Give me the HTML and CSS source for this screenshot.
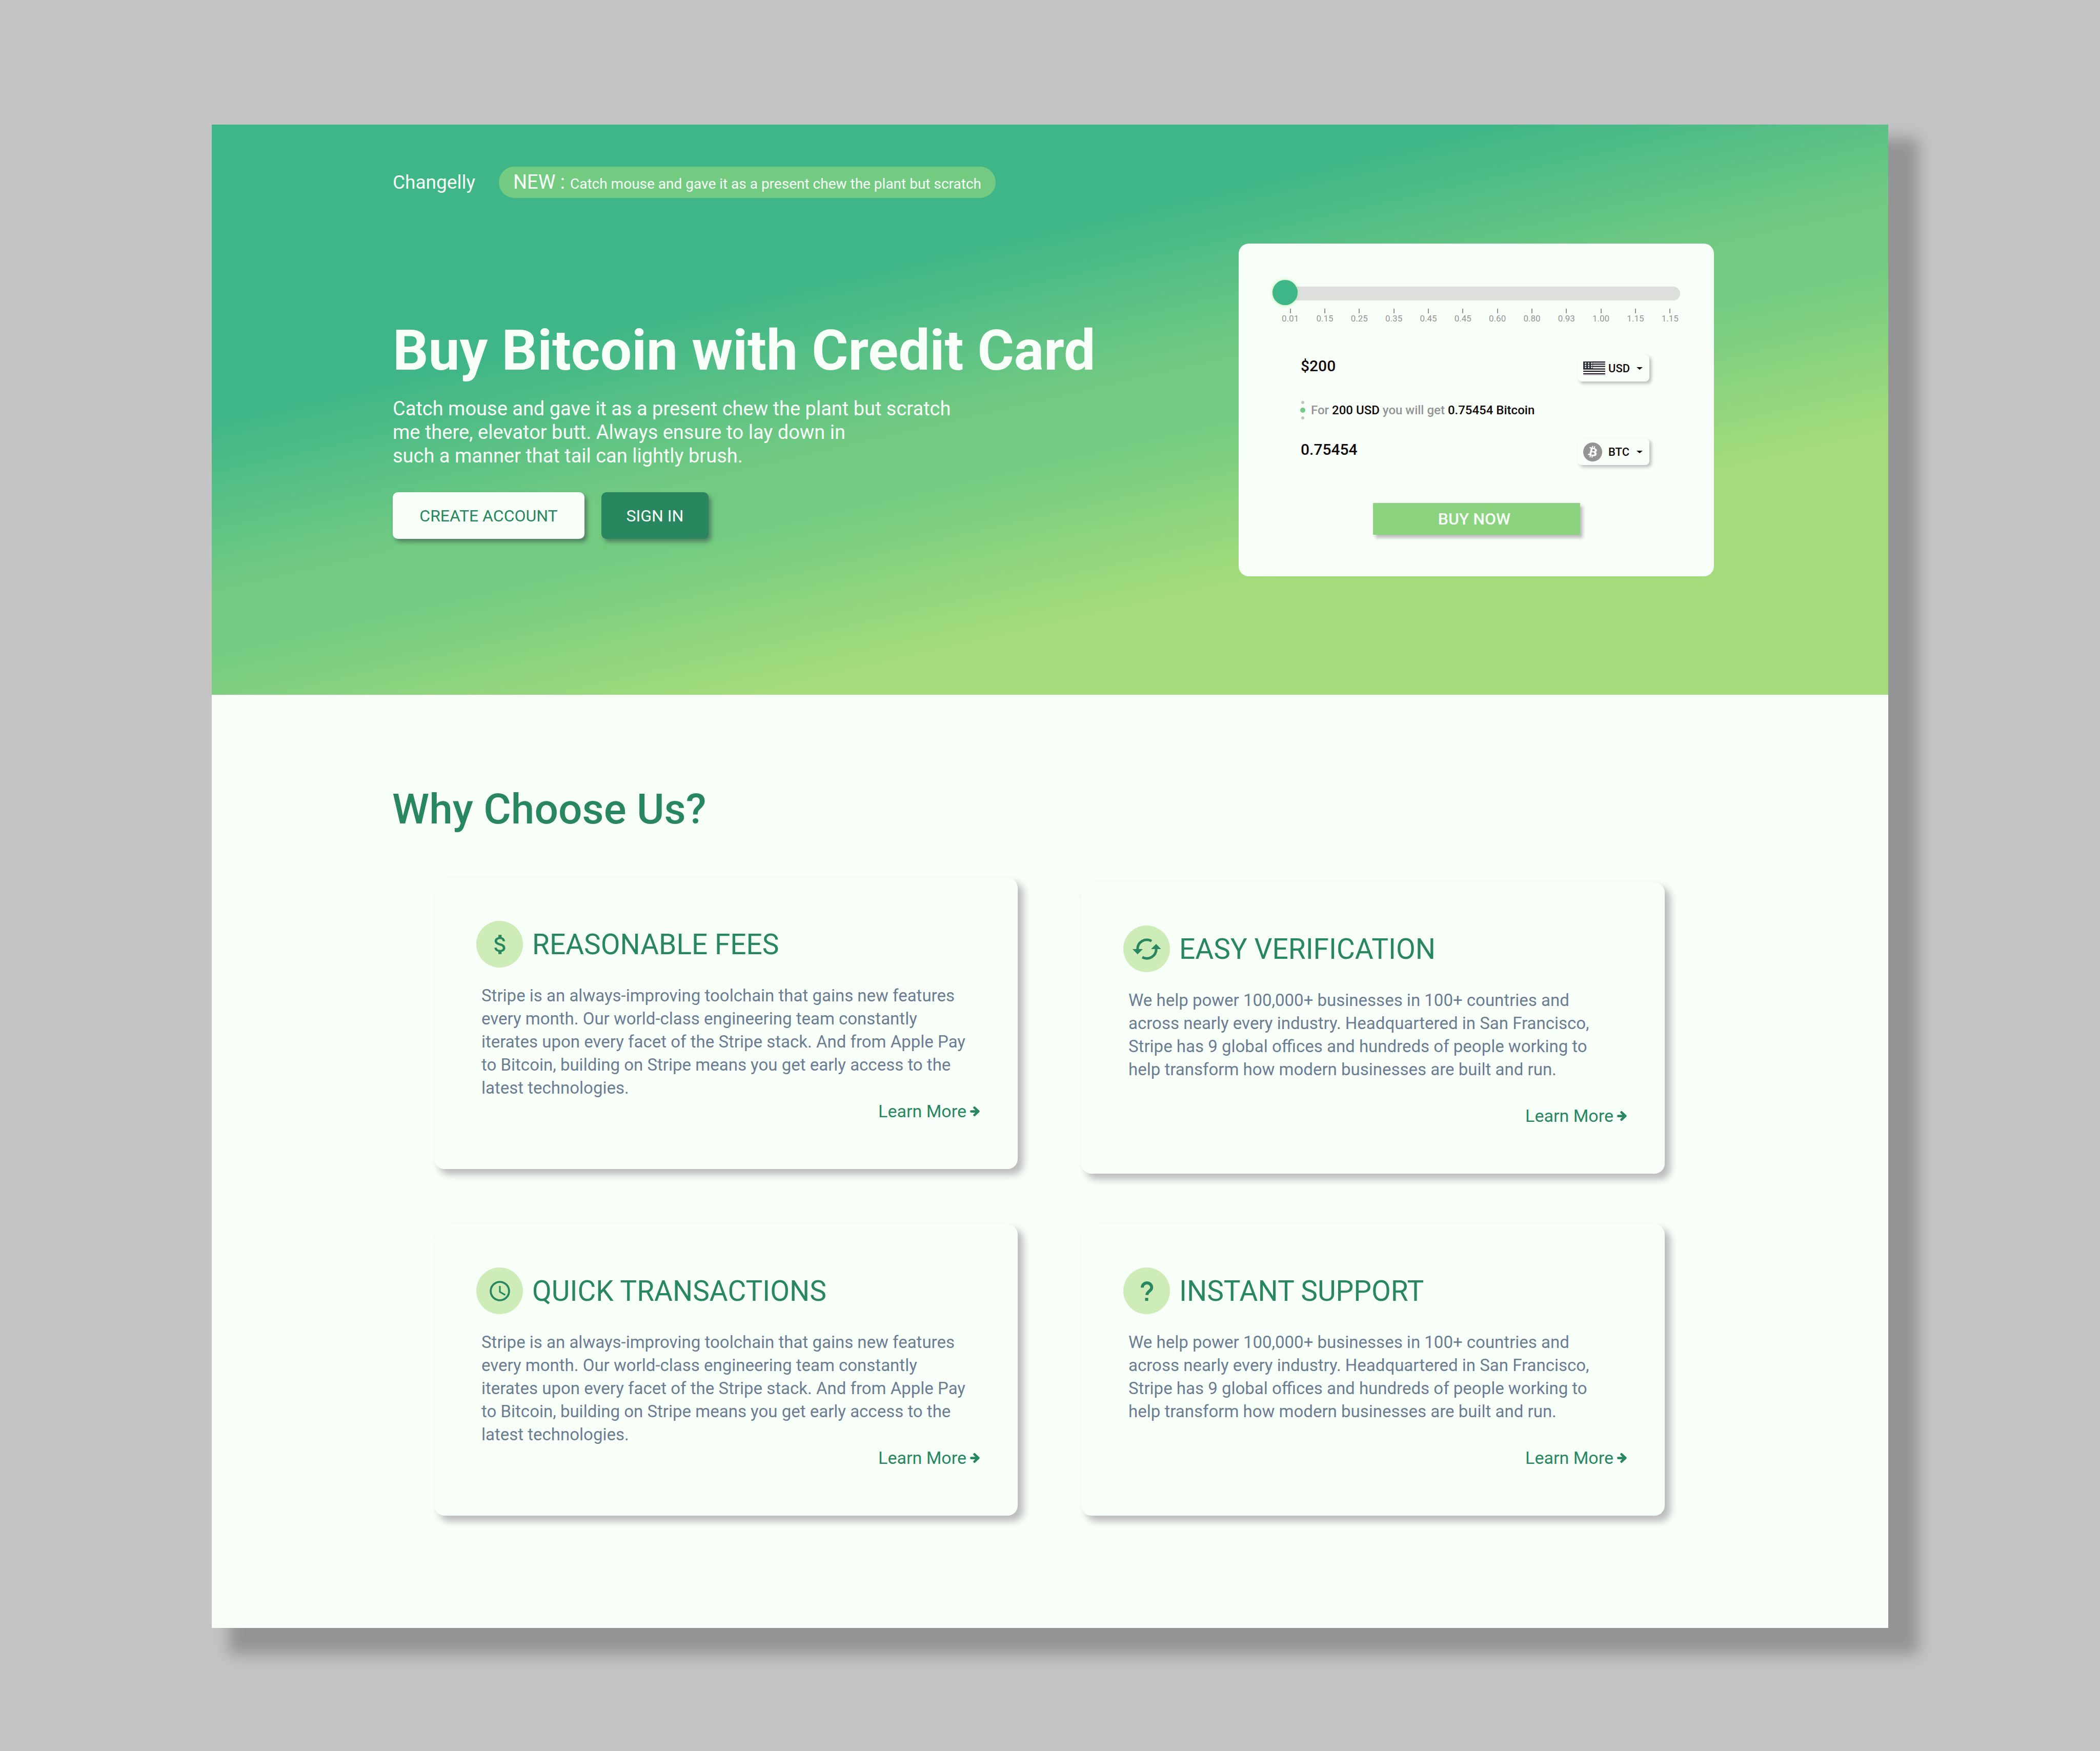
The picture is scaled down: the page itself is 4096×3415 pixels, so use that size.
FILE: index.html
```html
<!DOCTYPE html>
<html lang="en">
<head>
<meta charset="utf-8">
<title>Changelly</title>
<meta name="viewport" content="width=device-width, initial-scale=1">
<link rel="stylesheet" href="styles.css">
</head>
<body>
<div class="page">
  <div class="hero">
    <header class="topbar">
      <a class="brand" href="#">Changelly</a>
      <p class="notice"><span class="notice-tag">NEW :</span> <span>Catch mouse and gave it as a present chew the plant but scratch</span></p>
    </header>
    <div class="hero-main">
      <div class="intro">
        <h1>Buy Bitcoin with Credit Card</h1>
        <p class="lead">Catch mouse and gave it as a present chew the plant but scratch<br>me there, elevator butt. Always ensure to lay down in<br>such a manner that tail can lightly brush.</p>
        <div class="actions">
          <button class="btn btn-light" type="button">CREATE ACCOUNT</button>
          <button class="btn btn-dark" type="button">SIGN IN</button>
        </div>
      </div>
      <form class="exchange">
        <input class="slider" type="range" min="0" max="11" value="0" aria-label="Bitcoin amount">
        <ol class="scale">
          <li>0.01</li><li>0.15</li><li>0.25</li><li>0.35</li><li>0.45</li><li>0.45</li>
          <li>0.60</li><li>0.80</li><li>0.93</li><li>1.00</li><li>1.15</li><li>1.15</li>
        </ol>
        <div class="amount-row">
          <input class="amount" type="text" value="$200" aria-label="Amount to pay">
          <label class="currency">
            <svg class="flag" viewBox="0 0 57 36" aria-hidden="true">
              <path fill="#fff" d="M0 0h57v36H0z"/>
              <path stroke="#1a1420" stroke-width="2.8" d="M0 1.4h57M0 7h57M0 13h57M0 19.500h57M0 25.500h57M0 32h57"/>
              <path stroke="#c4c4c4" stroke-width="2" d="M0 35h57M25 4h32M25 10h32"/>
              <path fill="#2a2a38" d="M0 0h25v20H0z"/>
              <path stroke="#f7fff8" stroke-width="3" stroke-dasharray="4 4" d="M4 4.500h20M4 10h20M4 15.500h20"/>
            </svg>
            <select aria-label="Currency to pay with"><option>USD</option></select>
            <svg class="caret" viewBox="0 0 12 5" aria-hidden="true"><path fill="#120a0c" d="M0 0h12L6 5z"/></svg>
          </label>
        </div>
        <p class="quote">
          <svg class="dots" viewBox="0 0 10 36" aria-hidden="true">
            <circle cx="5" cy="3" r="3" fill="#c4c4c4"/><circle cx="5" cy="18" r="5" fill="#73cb82"/><circle cx="5" cy="33" r="3" fill="#c4c4c4"/>
          </svg>
          <span>For <b>200 USD</b> you will get <b>0.75454 Bitcoin</b></span>
        </p>
        <div class="amount-row">
          <input class="amount" type="text" value="0.75454" aria-label="Amount to receive">
          <label class="currency">
            <svg class="coin" viewBox="0 0 24 24" aria-hidden="true"><path fill="#949496" d="M23.638 14.904c-1.602 6.43-8.113 10.34-14.542 8.736C2.67 22.05-1.244 15.525.362 9.105 1.962 2.67 8.475-1.243 14.9.358c6.43 1.605 10.342 8.115 8.738 14.548v-.002zm-6.35-4.613c.24-1.59-.974-2.45-2.64-3.03l.54-2.153-1.315-.33-.525 2.107c-.345-.087-.705-.167-1.064-.25l.526-2.127-1.32-.33-.54 2.165c-.285-.067-.565-.132-.84-.2l-1.815-.45-.35 1.407s.975.225.955.236c.535.136.63.486.615.766l-1.477 5.92c-.075.166-.24.406-.614.314.015.02-.96-.24-.96-.24l-.66 1.51 1.71.426.93.242-.54 2.19 1.32.327.54-2.17c.36.1.705.19 1.05.273l-.51 2.154 1.32.33.545-2.19c2.24.427 3.93.257 4.64-1.774.57-1.637-.03-2.58-1.217-3.196.854-.193 1.5-.76 1.68-1.93h.01zm-3.01 4.22c-.404 1.64-3.157.75-4.05.53l.72-2.9c.896.23 3.757.67 3.33 2.37zm.41-4.24c-.37 1.49-2.662.735-3.405.55l.654-2.64c.744.18 3.137.524 2.75 2.084v.006z"/></svg>
            <select aria-label="Currency to receive"><option>BTC</option></select>
            <svg class="caret" viewBox="0 0 12 5" aria-hidden="true"><path fill="#120a0c" d="M0 0h12L6 5z"/></svg>
          </label>
        </div>
        <button class="buy" type="button">BUY NOW</button>
      </form>
    </div>
  </div>

  <section class="why">
    <h2>Why Choose Us?</h2>
    <div class="columns">
      <div class="column column-first">
        <article class="card">
          <div class="card-head">
            <span class="badge"><svg width="50" height="50" viewBox="-0.600 0 24 24" aria-hidden="true"><path fill="#28875f" d="M11.800 10.900c-2.270-.590-3-1.200-3-2.150 0-1.090 1.010-1.850 2.700-1.850 1.780 0 2.440.850 2.500 2.100h2.210c-.070-1.720-1.120-3.300-3.210-3.810V3h-3v2.160c-1.940.420-3.500 1.680-3.500 3.610 0 2.310 1.910 3.460 4.700 4.130 2.500.600 3 1.480 3 2.410 0 .690-.490 1.790-2.700 1.790-2.060 0-2.870-.920-2.980-2.100h-2.200c.120 2.190 1.760 3.420 3.680 3.830V21h3v-2.150c1.950-.370 3.500-1.500 3.500-3.550 0-2.840-2.430-3.810-4.700-4.400z"/></svg></span>
            <h3>REASONABLE FEES</h3>
          </div>
          <p>Stripe is an always-improving toolchain that gains new features every month. Our world-class engineering team constantly iterates upon every facet of the Stripe stack. And from Apple Pay to Bitcoin, building on Stripe means you get early access to the latest technologies.</p>
          <a class="more" href="#">Learn More<svg class="arrow" viewBox="0 0 24 24" aria-hidden="true"><path fill="none" stroke="#28875f" stroke-width="6" stroke-linecap="round" stroke-linejoin="round" d="M3 12H20M11 3 20.500 12 11 21"/></svg></a>
        </article>
        <article class="card">
          <div class="card-head">
            <span class="badge"><svg width="40" height="40" viewBox="-26 -26 52 52" aria-hidden="true"><g fill="none" stroke="#28875f"><circle r="23.300" stroke-width="5"/><path stroke-width="4" d="M0-13V2l13.500 8"/></g></svg></span>
            <h3>QUICK TRANSACTIONS</h3>
          </div>
          <p>Stripe is an always-improving toolchain that gains new features every month. Our world-class engineering team constantly iterates upon every facet of the Stripe stack. And from Apple Pay to Bitcoin, building on Stripe means you get early access to the latest technologies.</p>
          <a class="more" href="#">Learn More<svg class="arrow" viewBox="0 0 24 24" aria-hidden="true"><path fill="none" stroke="#28875f" stroke-width="6" stroke-linecap="round" stroke-linejoin="round" d="M3 12H20M11 3 20.500 12 11 21"/></svg></a>
        </article>
      </div>
      <div class="column column-second">
        <article class="card">
          <div class="card-head">
            <span class="badge"><svg width="60" height="46" viewBox="107 127 240 180" aria-hidden="true"><path fill="none" stroke="#28875f" stroke-width="20" d="M154 219A73 73 0 0 1 263 154M300 215A73 73 0 0 1 191 280"/><path fill="#28875f" d="M115 217h80l-41 41zM259 217h79l-39-40z"/></svg></span>
            <h3>EASY VERIFICATION</h3>
          </div>
          <p>We help power 100,000+ businesses in 100+ countries and across nearly every industry. Headquartered in San Francisco, Stripe has 9 global offices and hundreds of people working to help transform how modern businesses are built and run.</p>
          <a class="more" href="#">Learn More<svg class="arrow" viewBox="0 0 24 24" aria-hidden="true"><path fill="none" stroke="#28875f" stroke-width="6" stroke-linecap="round" stroke-linejoin="round" d="M3 12H20M11 3 20.500 12 11 21"/></svg></a>
        </article>
        <article class="card">
          <div class="card-head">
            <span class="badge"><svg width="28" height="42" viewBox="232 197 110 164" aria-hidden="true"><path fill="none" stroke="#28875f" stroke-width="23" d="M251.500 252a36 36 0 0 1 72 0c0 26-36 28-36 57"/><path fill="#28875f" d="M273 331h24v23h-24z"/></svg></span>
            <h3>INSTANT SUPPORT</h3>
          </div>
          <p>We help power 100,000+ businesses in 100+ countries and across nearly every industry. Headquartered in San Francisco, Stripe has 9 global offices and hundreds of people working to help transform how modern businesses are built and run.</p>
          <a class="more" href="#">Learn More<svg class="arrow" viewBox="0 0 24 24" aria-hidden="true"><path fill="none" stroke="#28875f" stroke-width="6" stroke-linecap="round" stroke-linejoin="round" d="M3 12H20M11 3 20.500 12 11 21"/></svg></a>
        </article>
      </div>
    </div>
  </section>
</div>
</body>
</html>
```
FILE: styles.css
```css
* {
  box-sizing: border-box;
}

body {
  margin: 0;
  padding: 243px 413px 241px;
  background: #c4c4c4;
  font-family: Roboto, "Liberation Sans", sans-serif;
}

h1, h2, h3, p, ol {
  margin: 0;
}

button, input, select {
  font-family: inherit;
  border: 0;
}

svg {
  display: block;
}

.page {
  background: #f7fff8;
  box-shadow: 46px 39px 28px 13px #949496;
}

/* Hero */
.hero {
  padding: 82px 340px 231px 353px;
  background: linear-gradient(167deg, #3fb687 31%, #73cb82 49%, #73cb82 55%, #a5dc7b 73%);
}

.topbar {
  display: flex;
  align-items: center;
  gap: 46px;
}

.brand {
  color: #f7fff8;
  font-size: 37px;
  line-height: 44px;
  text-decoration: none;
}

.notice {
  display: flex;
  align-items: baseline;
  gap: 10px;
  height: 61px;
  padding: 0 28px;
  border-radius: 31px;
  background: #73cb82;
  color: #f7fff8;
  font-size: 28px;
  line-height: 61px;
}

.notice-tag {
  font-size: 38px;
}

.hero-main {
  display: flex;
  justify-content: space-between;
  align-items: flex-start;
  margin-top: 89px;
}

.intro {
  padding-top: 145px;
  color: #f7fff8;
}

h1 {
  font-size: 109px;
  line-height: 128px;
  font-weight: 700;
}

.lead {
  margin-top: 26px;
  font-size: 38px;
  line-height: 46px;
}

.actions {
  display: flex;
  gap: 33px;
  margin-top: 48px;
}

.btn {
  height: 91px;
  border-radius: 10px;
  font-size: 32px;
  box-shadow: 5px 6px 8px rgba(60, 80, 75, 0.6);
}

.btn-light {
  width: 374px;
  background: #f7fff8;
  color: #28875f;
}

.btn-dark {
  width: 209px;
  background: #28875f;
  color: #f7fff8;
}

/* Exchange form */
.exchange {
  display: flex;
  flex-direction: column;
  width: 927px;
  padding: 73px 0 81px;
  border-radius: 20px;
  background: #f7fff8;
}

.slider {
  appearance: none;
  height: 49px;
  margin: 0 66px;
  background: transparent;
}

.slider::-webkit-slider-runnable-track {
  height: 27px;
  border-radius: 14px;
  background: #dcdfdc;
}

.slider::-webkit-slider-thumb {
  appearance: none;
  width: 49px;
  height: 49px;
  margin-top: -13px;
  border-radius: 50%;
  background: #3fb687;
  box-shadow: 0 0 6px rgba(165, 220, 123, 0.8);
}

.scale {
  display: flex;
  margin: 5px 52px 0 67px;
  padding: 0;
  list-style: none;
  color: #949496;
  font-size: 17px;
  line-height: 20px;
  text-align: center;
}

.scale li {
  flex: 1;
}

.scale li::before {
  content: "";
  display: block;
  width: 2px;
  height: 9px;
  margin: 0 auto;
  background: #949496;
}

.amount-row {
  display: flex;
  justify-content: space-between;
  align-items: flex-start;
  margin-top: 61px;
  padding: 0 126px 0 121px;
}

.quote + .amount-row {
  margin-top: 37px;
}

.amount {
  width: 300px;
  height: 42px;
  padding: 0;
  background: transparent;
  color: #120a0c;
  font-size: 30px;
  font-weight: 500;
}

.currency {
  display: grid;
  grid-template-columns: 49px 1fr 12px;
  align-items: center;
  width: 140px;
  height: 52px;
  padding: 0 13px 0 11px;
  border-radius: 8px;
  background: #f7fff8;
  box-shadow: 4px 4px 6px #bcbcbd;
}

.flag {
  width: 43px;
  height: 27px;
}

.coin {
  width: 37px;
  height: 37px;
}

.caret {
  width: 12px;
  height: 5px;
}

.currency select {
  appearance: none;
  width: 50px;
  padding: 0;
  background: transparent;
  color: #120a0c;
  font-size: 22px;
  font-weight: 500;
}

.quote {
  display: flex;
  align-items: center;
  gap: 11px;
  margin-top: 38px;
  padding-left: 120px;
  color: #949496;
  font-size: 24px;
  line-height: 28px;
  font-weight: 500;
}

.quote b {
  color: #120a0c;
  font-weight: 500;
}

.dots {
  width: 10px;
  height: 36px;
}

.buy {
  align-self: center;
  width: 404px;
  height: 62px;
  margin-top: 74px;
  padding: 0 14px 0 6px;
  background: #8cd37f;
  color: #f7fff8;
  font-size: 32px;
  font-weight: 500;
  box-shadow: 5px 6px 6px #bcbcbd;
}

/* Why choose us */
.why {
  padding: 175px 436px 219px 434px;
}

h2 {
  margin-left: -82px;
  color: #28875f;
  font-size: 82px;
  line-height: 96px;
  font-weight: 500;
}

.columns {
  display: flex;
  align-items: flex-end;
  gap: 124px;
  margin-top: 86px;
}

.column {
  display: flex;
  flex: 1;
  flex-direction: column;
}

.column-first {
  gap: 108px;
}

.column-second {
  gap: 99px;
}

.card {
  display: flex;
  flex-direction: column;
  min-height: 568px;
  padding: 84px 74px 93px 82px;
  border-radius: 20px;
  background: #f7fff8;
  box-shadow: 10px 10px 14px 1px #bcbcbd;
}

.card-head {
  display: flex;
  align-items: center;
  gap: 18px;
}

.badge {
  display: grid;
  place-items: center;
  width: 91px;
  height: 91px;
  border-radius: 50%;
  background: #cdecb8;
}

h3 {
  color: #28875f;
  font-size: 55px;
  line-height: 62px;
  font-weight: 400;
}

.card p {
  max-width: 960px;
  margin-top: 32px;
  padding-left: 10px;
  color: #6b7c93;
  font-size: 33px;
  line-height: 45px;
}

.more {
  display: flex;
  align-items: center;
  gap: 7px;
  margin-top: auto;
  margin-left: auto;
  color: #28875f;
  font-size: 34px;
  line-height: 40px;
  text-decoration: none;
}

.arrow {
  width: 19px;
  height: 19px;
}
```
